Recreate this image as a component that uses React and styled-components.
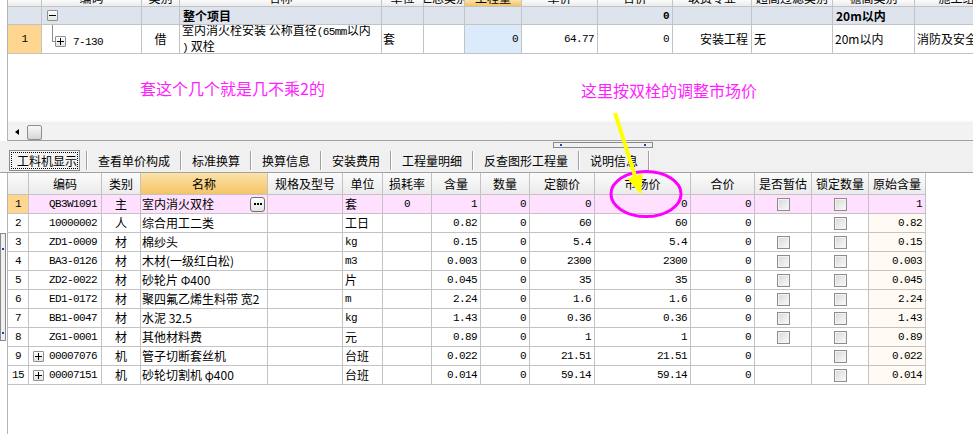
import React from 'react';
import styled, { createGlobalStyle, css } from 'styled-components';

const GRID = '#c3c3c3';
const PINK = '#ffe0ff';
const ORANGE = '#ffd68f';

const GlobalStyle = createGlobalStyle`
  html, body {
    margin: 0;
    padding: 0;
    background: #fff;
  }
  body {
    font-family: "Noto Sans CJK SC", "Liberation Sans", sans-serif;
    font-size: 12px;
    color: #000;
  }
`;

const Page = styled.div`
  position: relative;
  width: 973px;
  height: 434px;
  overflow: hidden;
  display: flex;
  flex-direction: column;
  background: #f0f0f0;
`;

const Pane = styled.div`
  display: flex;
  flex: ${p => (p.$grow ? 1 : 'none')};
  height: ${p => (p.$h ? `${p.$h}px` : 'auto')};
  min-height: 0;
`;

const Gutter = styled.div`
  flex: none;
  width: 7px;
  background: ${p => p.$bg || '#fff'};
  display: flex;
  flex-direction: column;
  align-items: flex-start;
`;

const PaneBody = styled.div`
  flex: 1;
  min-width: 0;
  display: flex;
  flex-direction: column;
  overflow: hidden;
  background: #fff;
  border-left: 1px solid #b4b4b4;
`;

const Grid = styled.div`
  display: grid;
  grid-template-columns: ${p => p.$cols.map(w => `${w}px`).join(' ')};
  grid-template-rows: ${p => p.$rows};
  grid-auto-rows: ${p => p.$auto || 'auto'};
`;

const justify = { left: 'flex-start', right: 'flex-end', center: 'center', between: 'space-between' };

const Cell = styled.div`
  box-sizing: border-box;
  min-width: 0;
  display: flex;
  align-items: center;
  justify-content: ${p => justify[p.$align || 'left']};
  padding: ${p => p.$pad || '0 3px'};
  border-right: 1px solid ${GRID};
  border-bottom: 1px solid ${GRID};
  background: ${p => p.$bg || '#fff'};
  font-weight: ${p => (p.$bold ? 700 : 400)};
  white-space: nowrap;
  overflow: hidden;
  line-height: 16px;
`;

const HeadCell = styled(Cell)`
  justify-content: center;
  align-items: ${p => (p.$cut ? 'flex-end' : 'center')};
  background: ${p =>
    p.$hot ? 'linear-gradient(#fbe3a8, #f4c466)' : 'linear-gradient(#fbfbfb, #ebebeb)'};
`;

const Lines = styled.span`
  display: flex;
  flex-direction: column;
`;

const Line = styled.span`
  display: block;
  white-space: nowrap;
  line-height: 13px;
`;

const Num = styled.span`
  font-family: "Liberation Mono", "DejaVu Sans Mono", monospace;
  font-size: 11px;
  letter-spacing: -0.6px;
`;

const Expander = styled.span`
  position: relative;
  flex: none;
  box-sizing: border-box;
  width: 11px;
  height: 11px;
  margin-right: ${p => p.$gap || 0}px;
  border: 1px solid #909090;
  border-radius: 1px;
  background: linear-gradient(#fff, #e2e2e2);
  &::before {
    content: '';
    position: absolute;
    left: 1px;
    right: 1px;
    top: 4px;
    height: 1px;
    background: #000;
  }
  ${p =>
    p.$plus &&
    css`
      &::after {
        content: '';
        position: absolute;
        top: 1px;
        bottom: 1px;
        left: 4px;
        width: 1px;
        background: #000;
      }
    `}
`;

const Connector = styled.span`
  flex: none;
  align-self: flex-start;
  width: 2px;
  height: 16px;
  margin-top: -5px;
  border-left: 1px solid #8c8c8c;
  border-bottom: 1px solid #8c8c8c;
`;

const Check = styled.span`
  box-sizing: border-box;
  width: 13px;
  height: 13px;
  border: 1px solid #8e8e8e;
  background: linear-gradient(135deg, #d8d8d8, #fafafa);
  box-shadow: inset 0 0 0 1px #f2f2f2;
`;

const MoreButton = styled.span`
  box-sizing: border-box;
  flex: none;
  width: 15px;
  height: 15px;
  display: flex;
  align-items: center;
  justify-content: center;
  gap: 1px;
  border: 1px solid #6e6e6e;
  border-radius: 3px;
  background: linear-gradient(#fff, #e4e4e4);
`;

const Dot = styled.i`
  width: 2px;
  height: 2px;
  background: ${p => p.$color || '#000'};
`;

/* top pane scroll */
const Filler = styled.div`
  flex: 1;
  background: linear-gradient(#fff calc(100% - 4px), #ececec);
`;

const ScrollBar = styled.div`
  box-sizing: border-box;
  height: 17px;
  display: flex;
  align-items: center;
  padding-left: 7px;
  background: #f2f2f2;
  border-bottom: 1px solid #a0a0a0;
`;

const ArrowLeft = styled.span`
  width: 0;
  height: 0;
  border-top: 3px solid transparent;
  border-bottom: 3px solid transparent;
  border-right: 4px solid #000;
`;

const Thumb = styled.span`
  box-sizing: border-box;
  width: 15px;
  height: 15px;
  margin-left: 8px;
  border: 1px solid #8e8e8e;
  border-radius: 2px;
  background: linear-gradient(#f8f8f8, #d6d6d6);
`;

/* middle: splitter + tabs */
const Middle = styled.div`
  flex: none;
  display: flex;
  flex-direction: column;
`;

const Splitter = styled.div`
  height: 8px;
  display: flex;
  align-items: flex-start;
  padding: 1px 0 0 553px;
  box-sizing: border-box;
`;

const Grip = styled.div`
  box-sizing: border-box;
  width: ${p => p.$w}px;
  height: ${p => p.$h}px;
  display: flex;
  flex-direction: ${p => (p.$vertical ? 'column' : 'row')};
  align-items: center;
  justify-content: space-between;
  padding: ${p => p.$pad};
  border: 1px solid #8a8a8a;
  background: #f0f0f0;
  margin-top: ${p => p.$top || 0}px;
`;

const TabBar = styled.div`
  box-sizing: border-box;
  height: 24px;
  display: flex;
  align-items: center;
  padding-left: 9px;
  border-bottom: 1px solid #a0a0a0;
`;

const Tab = styled.div`
  box-sizing: border-box;
  height: 21px;
  display: flex;
  align-items: center;
  padding: 0 10px;
  white-space: nowrap;
  ${p =>
    p.$active &&
    css`
      width: 71px;
      margin-right: 6px;
      padding: 2px;
      border: 1px solid #8a8a8a;
      background: #f4f4f4;
    `}
`;

const FocusBox = styled.span`
  flex: 1;
  align-self: stretch;
  display: flex;
  align-items: center;
  padding-left: 5px;
  outline: 1px dotted #000;
`;

const TabSep = styled.span`
  width: 1px;
  height: 19px;
  background: #a0a0a0;
  border-right: 1px solid #fff;
`;

/* annotations over the screenshot */
const Note = styled.div`
  position: absolute;
  left: ${p => p.$x}px;
  top: ${p => p.$y}px;
  color: #ff1eff;
  font-size: 16px;
  line-height: 20px;
  white-space: nowrap;
`;

const Overlay = styled.svg`
  position: absolute;
  left: 0;
  top: 0;
  pointer-events: none;
`;

const topCols = [34, 100, 38, 202, 42, 41, 57, 76, 75, 79, 81, 82, 120];
const topHead = ['', '编码', '类别', '名称', '单位', '汇总类别', '工程量', '单价', '合价', '取费专业', '超高过滤类别', '檐高类别', '施工组织措施'];

const botCols = [21, 73, 39, 127, 75, 40, 49, 49, 49, 65, 96, 64, 57, 57, 57];
const botHead = ['', '编码', '类别', '名称', '规格及型号', '单位', '损耗率', '含量', '数量', '定额价', '市场价', '合价', '是否暂估', '锁定数量', '原始含量'];

const rows = [
  { no: '1', code: 'QB3W1091', kind: '主', name: '室内消火双栓', unit: '套', loss: '0', qty: '1', price: '0', market: '0', est: true, orig: '1' },
  { no: '2', code: '10000002', kind: '人', name: '综合用工二类', unit: '工日', qty: '0.82', price: '60', market: '60', est: false, orig: '0.82' },
  { no: '3', code: 'ZD1-0009', kind: '材', name: '棉纱头', unit: 'kg', mono: true, qty: '0.15', price: '5.4', market: '5.4', est: true, orig: '0.15' },
  { no: '4', code: 'BA3-0126', kind: '材', name: '木材(一级红白松)', unit: 'm3', mono: true, qty: '0.003', price: '2300', market: '2300', est: true, orig: '0.003' },
  { no: '5', code: 'ZD2-0022', kind: '材', name: '砂轮片 Φ400', unit: '片', qty: '0.045', price: '35', market: '35', est: true, orig: '0.045' },
  { no: '6', code: 'ED1-0172', kind: '材', name: '聚四氟乙烯生料带 宽2', unit: 'm', mono: true, qty: '2.24', price: '1.6', market: '1.6', est: true, orig: '2.24' },
  { no: '7', code: 'BB1-0047', kind: '材', name: '水泥 32.5', unit: 'kg', mono: true, qty: '1.43', price: '0.36', market: '0.36', est: true, orig: '1.43' },
  { no: '8', code: 'ZG1-0001', kind: '材', name: '其他材料费', unit: '元', qty: '0.89', price: '1', market: '1', est: true, orig: '0.89' },
  { no: '9', code: '00007076', kind: '机', name: '管子切断套丝机', unit: '台班', tree: true, qty: '0.022', price: '21.51', market: '21.51', est: false, orig: '0.022' },
  { no: '15', code: '00007151', kind: '机', name: '砂轮切割机 φ400', unit: '台班', tree: true, qty: '0.014', price: '59.14', market: '59.14', est: false, orig: '0.014' },
];

function TopTable() {
  const group = '#dde4ee';
  return (
    <Grid $cols={topCols} $rows="7px 18px 29px">
      {topHead.map((h, i) => (
        <HeadCell key={i} $cut $hot={h === '工程量'}>{h}</HeadCell>
      ))}

      <Cell $bg={group} />
      <Cell $bg={group} $pad="0 0 0 5px"><Expander /></Cell>
      <Cell $bg={group} />
      <Cell $bg={group} $bold>整个项目</Cell>
      <Cell $bg={group} />
      <Cell $bg={group} />
      <Cell $bg={group} />
      <Cell $bg={group} />
      <Cell $bg={group} $align="right" $bold><Num>0</Num></Cell>
      <Cell $bg={group} />
      <Cell $bg={group} />
      <Cell $bg={group} $bold>20m以内</Cell>
      <Cell $bg={group} />

      <Cell $bg={ORANGE} $align="center"><Num>1</Num></Cell>
      <Cell $pad="5px 0 0 10px">
        <Connector />
        <Expander $plus $gap={7} />
        <Num>7-130</Num>
      </Cell>
      <Cell $align="center">借</Cell>
      <Cell $pad="0 2px">
        <Lines>
          <Line>室内消火栓安装 公称直径<Num>(65mm</Num>以内</Line>
          <Line><Num>)</Num> 双栓</Line>
        </Lines>
      </Cell>
      <Cell $pad="0 1px">套</Cell>
      <Cell />
      <Cell $bg="#dcebfc" $align="right"><Num>0</Num></Cell>
      <Cell $align="right"><Num>64.77</Num></Cell>
      <Cell $align="right"><Num>0</Num></Cell>
      <Cell $align="right">安装工程</Cell>
      <Cell $pad="0 2px">无</Cell>
      <Cell $pad="0 2px">20m以内</Cell>
      <Cell $pad="0 2px">消防及安全防护</Cell>
    </Grid>
  );
}

function BottomTable() {
  return (
    <Grid $cols={botCols} $rows="22px" $auto="19px">
      {botHead.map((h, i) => (
        <HeadCell key={i} $hot={h === '名称'}>{h}</HeadCell>
      ))}
      {rows.map((r, i) => {
        const bg = i === 0 ? PINK : '#fff';
        return (
          <React.Fragment key={r.no}>
            <Cell $align="center" $pad="0" $bg={i === 0 ? ORANGE : '#fff'}><Num>{r.no}</Num></Cell>
            <Cell $bg={bg} $pad={r.tree ? '0 0 0 4px' : '0 0 0 20px'}>
              {r.tree && <Expander $plus $gap={5} />}
              <Num>{r.code}</Num>
            </Cell>
            <Cell $bg={bg} $align="center">{r.kind}</Cell>
            <Cell $bg={bg} $align={i === 0 ? 'between' : 'left'} $pad="0 2px 0 1px">
              {r.name}
              {i === 0 && (
                <MoreButton><Dot /><Dot /><Dot /></MoreButton>
              )}
            </Cell>
            <Cell $bg={bg} />
            <Cell $bg={bg} $pad="0 2px">{r.mono ? <Num>{r.unit}</Num> : r.unit}</Cell>
            <Cell $bg={bg} $align="center"><Num>{r.loss}</Num></Cell>
            <Cell $bg={bg} $align="right"><Num>{r.qty}</Num></Cell>
            <Cell $bg={bg} $align="right"><Num>0</Num></Cell>
            <Cell $bg={bg} $align="right"><Num>{r.price}</Num></Cell>
            <Cell $bg={bg} $align="right"><Num>{r.market}</Num></Cell>
            <Cell $bg={bg} $align="right"><Num>0</Num></Cell>
            <Cell $bg={bg} $align="center">{r.est && <Check />}</Cell>
            <Cell $bg={bg} $align="center"><Check /></Cell>
            <Cell $bg={i === 0 ? PINK : '#fffaf3'} $align="right"><Num>{r.orig}</Num></Cell>
          </React.Fragment>
        );
      })}
    </Grid>
  );
}

const tabs = ['查看单价构成', '标准换算', '换算信息', '安装费用', '工程量明细', '反查图形工程量', '说明信息'];

export default function App() {
  return (
    <>
      <GlobalStyle />
      <Page>
        <Pane $h={141}>
          <Gutter />
          <PaneBody>
            <TopTable />
            <Filler />
            <ScrollBar>
              <ArrowLeft />
              <Thumb />
            </ScrollBar>
          </PaneBody>
        </Pane>

        <Middle>
          <Splitter>
            <Grip $w={100} $h={6} $pad="0 6px">
              <Dot $color="#1a3fbf" />
              <Dot $color="#1a3fbf" />
            </Grip>
          </Splitter>
          <TabBar>
            <Tab $active><FocusBox>工料机显示</FocusBox></Tab>
            {tabs.map(t => (
              <React.Fragment key={t}>
                <TabSep />
                <Tab>{t}</Tab>
              </React.Fragment>
            ))}
            <TabSep />
          </TabBar>
        </Middle>

        <Pane $grow>
          <Gutter>
            <Grip $vertical $w={6} $h={108} $top={60} $pad="14px 0 6px">
              <Dot $color="#1a3fbf" />
              <Dot $color="#1a3fbf" />
            </Grip>
          </Gutter>
          <PaneBody>
            <BottomTable />
          </PaneBody>
        </Pane>

        <Note $x={140} $y={78}>套这个几个就是几不乘2的</Note>
        <Note $x={581} $y={80}>这里按双栓的调整市场价</Note>

        <Overlay width="973" height="434" viewBox="0 0 973 434">
          <ellipse cx="646" cy="194" rx="35" ry="22.5" fill="none" stroke="#f0f" strokeWidth="3" />
          <polygon
            points="613.1,113.6 633.1,176.6 627.4,178.4 641,195 642.6,173.6 636.9,175.4 616.9,112.4"
            fill="#ffff00"
          />
        </Overlay>
      </Page>
    </>
  );
}
